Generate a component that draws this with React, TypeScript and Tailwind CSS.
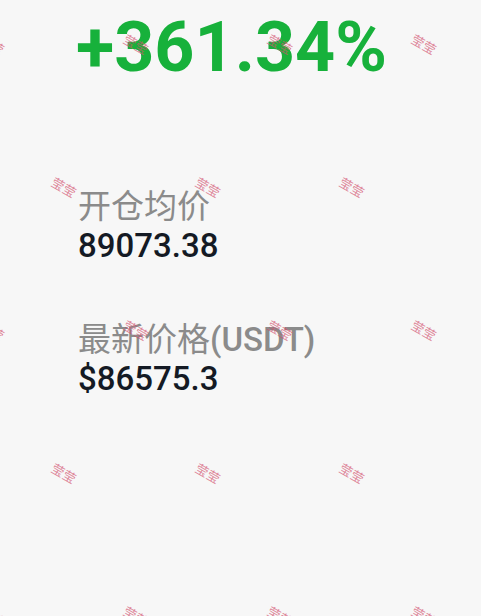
const marks: { x: number; y: number }[] = [];
for (let k = 0; k < 5; k++) {
  const shift = k % 2 === 1 ? -72 : 0;
  for (let j = -1; j < 4; j++) {
    marks.push({ x: 136 + 144 * j + shift, y: 44 + 143 * k });
  }
}

function Watermarks() {
  return (
    <div className="pointer-events-none absolute inset-0 overflow-hidden">
      {marks.map((m, i) => (
        <span
          key={i}
          className="absolute -translate-x-1/2 -translate-y-1/2 rotate-[30deg] whitespace-nowrap text-[13px] leading-none text-[#d2506e]/70"
          style={{ left: m.x, top: m.y, fontFamily: '"Noto Sans CJK SC", sans-serif' }}
        >
          莹莹
        </span>
      ))}
    </div>
  );
}

export default function App() {
  return (
    <div
      className="relative h-[616px] w-full overflow-hidden bg-[#f7f7f7]"
      style={{ fontFamily: 'Roboto, "Noto Sans CJK SC", sans-serif' }}
    >
      <div className="flex flex-col pl-[78px]">
        <div className="mt-[7px] ml-[-2px] text-[70px] font-bold leading-[80px] text-[#17b13b]">
          +361.34%
        </div>

        <div className="mt-[100px] text-[33px] leading-[39px] text-[#8b8b8b]">开仓均价</div>
        <div className="text-[33px] font-medium leading-[39px] text-[#141a24]">89073.38</div>

        <div className="mt-[55px] text-[33px] leading-[39px] text-[#8b8b8b]">
          最新价格<span className="font-medium">(USDT)</span>
        </div>
        <div className="text-[33px] font-medium leading-[39px] text-[#141a24]">$86575.3</div>
      </div>
      <Watermarks />
    </div>
  );
}
